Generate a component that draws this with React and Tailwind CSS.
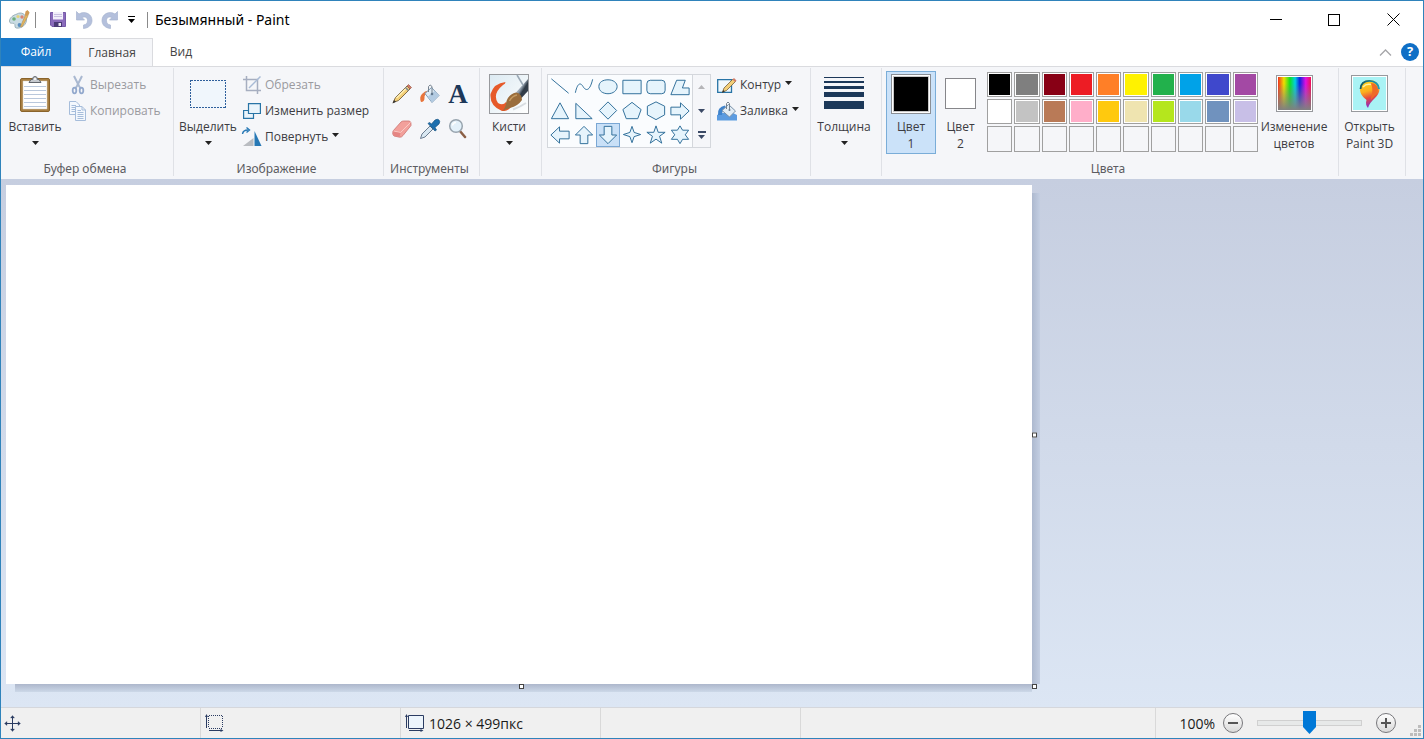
import { useState } from 'react'

const SHAPES = [
  { name: 'Линия', d: 'M3 4 L21 19' },
  { name: 'Кривая', d: 'M3 18.500 C5 9 8 7 11 12 S18 17 21 4.500', open: true },
  { name: 'Овал', d: 'M12 5 C17.500 5 21.500 8 21.500 12 S17.500 19.500 12 19.500 S2.500 16.500 2.500 12 S6.500 5 12 5 Z' },
  { name: 'Прямоугольник', d: 'M2.500 5.500 H21.500 V19.500 H2.500 Z' },
  { name: 'Скругленный прямоугольник', d: 'M6 5.500 H18 Q21.500 5.500 21.500 9 V16 Q21.500 19.500 18 19.500 H6 Q2.500 19.500 2.500 16 V9 Q2.500 5.500 6 5.500 Z' },
  { name: 'Многоугольник', d: 'M8.500 5.500 H17.500 L14.500 13.500 H21.500 V20.500 H2.500 Z' },
  { name: 'Треугольник', d: 'M12 4 L21 20.500 H3 Z' },
  { name: 'Прямоугольный треугольник', d: 'M3.500 4.500 L20.500 20.500 H3.500 Z' },
  { name: 'Ромб', d: 'M12 3 L21 12 L12 21 L3 12 Z' },
  { name: 'Пятиугольник', d: 'M12 3.500 L21.500 11 L18 20.500 H6 L2.500 11 Z' },
  { name: 'Шестиугольник', d: 'M12 3 L21 7.500 V16.500 L12 21.500 L3 16.500 V7.500 Z' },
  { name: 'Стрелка вправо', d: 'M2.500 8.500 H12.500 V4 L21.500 12.500 L12.500 21 V16.500 H2.500 Z' },
  { name: 'Стрелка влево', d: 'M21.500 8.500 H11.500 V4 L2.500 12.500 L11.500 21 V16.500 H21.500 Z' },
  { name: 'Стрелка вверх', d: 'M8 21.500 V12.500 H3 L12 3.500 L21 12.500 H16 V21.500 Z' },
  { name: 'Стрелка вниз', d: 'M8 3.500 V12.500 H3 L12 21.500 L21 12.500 H16 V3.500 Z' },
  { name: 'Четырехконечная звезда', d: 'M12 3.500 L14.200 9.800 L21 12 L14.200 14.200 L12 20.500 L9.800 14.200 L3 12 L9.800 9.800 Z' },
  { name: 'Пятиконечная звезда', d: 'M12 3 L14.300 9.700 H21.500 L15.700 13.800 L18 21 L12 16.800 L6 21 L8.300 13.800 L2.500 9.700 H9.700 Z' },
  { name: 'Шестиконечная звезда', d: 'M12 3 L14.700 7.500 H21 L17.500 12.300 L21 17 H14.700 L12 21.500 L9.300 17 H3 L6.500 12.300 L3 7.500 H9.300 Z' },
]

const COLORS = [
  'bg-[#000000]', 'bg-[#7f7f7f]', 'bg-[#880015]', 'bg-[#ed1c24]', 'bg-[#ff7f27]',
  'bg-[#fff200]', 'bg-[#22b14c]', 'bg-[#00a2e8]', 'bg-[#3f48cc]', 'bg-[#a349a4]',
  'bg-[#ffffff]', 'bg-[#c3c3c3]', 'bg-[#b97a57]', 'bg-[#ffaec9]', 'bg-[#ffc90e]',
  'bg-[#efe4b0]', 'bg-[#b5e61d]', 'bg-[#99d9ea]', 'bg-[#7092be]', 'bg-[#c8bfe7]',
]

function Caret({ up, className = 'text-[#222]' }) {
  return (
    <svg width="7" height="4" viewBox="0 0 7 4" className={className} fill="currentColor">
      <path d={up ? 'M0 4 H7 L3.500 0 Z' : 'M0 0 H7 L3.500 4 Z'} />
    </svg>
  )
}

function Group({ label, className, children }) {
  return (
    <section className={`flex shrink-0 flex-col border-r border-[#dfe1e6] pt-[3px] ${className}`}>
      <div className="flex h-[83px] items-start">{children}</div>
      <div className="mt-1.5 h-4 pr-2 text-center font-['Noto_Sans',sans-serif] text-[12px] leading-[18px] text-[#5c5c62]">{label}</div>
    </section>
  )
}

function BigButton({ icon, label, second, className = 'w-15' }) {
  return (
    <button type="button" className={`flex h-[83px] shrink-0 flex-col items-center whitespace-nowrap ${className}`}>
      <span className="mb-[3px] flex h-[45px] items-center justify-center">{icon}</span>
      <span className="h-4 leading-4">{label}</span>
      {second ? <span className="leading-[18px]">{second}</span> : <span className="flex h-[15px] items-center"><Caret /></span>}
    </button>
  )
}

function SmallButton({ icon, label, menu, disabled }) {
  return (
    <button
      type="button"
      disabled={disabled}
      className="flex h-[26px] items-center gap-1 whitespace-nowrap disabled:text-[#9a9a9f]"
    >
      {icon}
      <span>{label}</span>
      {menu && <Caret className="mb-1 text-[#222]" />}
    </button>
  )
}

function PaletteIcon() {
  return (
    <svg width="21" height="20" viewBox="0 0 21 20">
      <path d="M8 4 C12 1.500 17 4 17.500 9 C18 14 13 19 7 18 C5 17.500 7 14.500 5 13.500 C3 13 0.500 14 0.500 11 C0.500 8 4 5 8 4 Z" fill="#c9dbe3" stroke="#8ba3ad" strokeWidth="0.800" />
      <circle cx="5" cy="9" r="1.800" fill="#6fae7d" />
      <circle cx="9" cy="6.500" r="1.600" fill="#e3d37d" />
      <circle cx="13" cy="7" r="1.700" fill="#d98372" />
      <circle cx="10.500" cy="15" r="1.900" fill="#5a8fc0" />
      <path d="M18 1 L20 2 L18.500 7 L13 17 L11.500 16.500 L16 6 Z" fill="#e5b65e" stroke="#b08d52" strokeWidth="0.600" />
      <path d="M16.500 1.500 L18.500 0 L20.500 3 L18 6 L16 5 Z" fill="#d19b55" />
    </svg>
  )
}

function SaveIcon() {
  return (
    <svg width="16" height="15" viewBox="0 0 16 15">
      <path d="M0.500 0.500 H15.500 V14.500 H2 L0.500 13 Z" fill="#8a6bbb" stroke="#7559a8" />
      <path d="M3 0 H13 V7.500 H3 Z" fill="#f2effa" />
      <path d="M4 2.500 H12 M4 4.500 H12" stroke="#c8bfe0" />
      <path d="M4 10 H12 V15 H4 Z" fill="#4b3b76" />
      <path d="M8.500 11 H11 V14 H8.500 Z" fill="#ece9f5" />
    </svg>
  )
}

function UndoIcon({ flip }) {
  return (
    <svg width="17" height="18" viewBox="0 0 17 18" className={flip ? '-scale-x-100' : ''}>
      <path d="M0.500 0.500 L3 3 C9 -0.500 16 3 16 9.500 C16 14 12.500 17 7.500 17.500 V14 C10.500 13.500 11.500 12 11.500 9.500 C11.500 6.500 9 5 6 6.500 L8.500 9 H0.500 Z" fill="#b4c0dc" stroke="#a8b4d0" strokeWidth="0.700" />
    </svg>
  )
}

function PasteIcon() {
  return (
    <svg width="32" height="38" viewBox="0 0 32 38">
      <rect x="1.500" y="3.500" width="29" height="33" rx="1.500" fill="#a87f42" stroke="#8a642c" />
      <path d="M4 6 H28 V34 H4 Z" fill="#fff" stroke="#d8d1c2" strokeWidth="0.500" />
      <path d="M5 11.500 H27 M5 15.500 H27 M5 19.500 H27 M5 23.500 H27 M5 27.500 H27 M5 31.500 H27" stroke="#b9c8dc" />
      <path d="M10 7.500 L12 4.500 H13.500 Q13.500 1.500 16 1.500 T18.500 4.500 H20 L22 7.500 Z" fill="#c5c9ce" stroke="#62676e" />
      <circle cx="16" cy="4" r="1" fill="#fff" />
    </svg>
  )
}

function CutIcon() {
  return (
    <svg width="16" height="20" viewBox="0 0 16 20" fill="none">
      <path d="M4 1 L9 11 L11 14 M12 1 L7 11 L5 14" stroke="#a9b8d0" strokeWidth="2" />
      <ellipse cx="4.500" cy="15.500" rx="1.800" ry="2.800" stroke="#93a9cd" strokeWidth="1.800" />
      <ellipse cx="11.500" cy="15.500" rx="1.800" ry="2.800" stroke="#93a9cd" strokeWidth="1.800" />
    </svg>
  )
}

function CopyIcon() {
  return (
    <svg width="16" height="20" viewBox="0 0 16 20" className="overflow-visible" fill="#f4f8fd" stroke="#a6bddb">
      <path d="M-0.500 0.500 H6 L9.500 4 V13.500 H-0.500 Z" />
      <path d="M1.500 4.500 H6 M1.500 6.500 H6 M1.500 8.500 H6 M1.500 10.500 H6" />
      <path d="M5.500 5.500 H12 L15.500 9 V19.500 H5.500 Z M12 5.500 V9 H15.500" />
      <path d="M7.500 9.500 H11 M7.500 11.500 H13.500 M7.500 13.500 H13.500 M7.500 15.500 H13.500 M7.500 17.500 H13.500" />
    </svg>
  )
}

function SelectIcon() {
  return (
    <svg width="36" height="28" viewBox="0 0 36 28" shapeRendering="crispEdges">
      <rect x="0.500" y="0.500" width="35" height="27" fill="#f0f6fc" stroke="#2d5f9c" strokeDasharray="2 1" />
    </svg>
  )
}

function CropIcon() {
  return (
    <svg width="18" height="18" viewBox="0 0 18 18" fill="none" stroke="#a6aec0" strokeWidth="1.500">
      <path d="M3.500 0 V14.500 H18 M0 3.500 H14.500 V18" />
      <path d="M17.500 0.500 L6 12" stroke="#a9bbd6" />
    </svg>
  )
}

function ResizeIcon() {
  return (
    <svg width="18" height="18" viewBox="0 0 18 18" fill="#eaf4fb" stroke="#2874a6" strokeWidth="1.200">
      <path d="M0.600 8.500 H10.500 V16.400 H0.600 Z" />
      <path d="M5.500 1.600 H17.400 V11.500 H5.500 Z" />
    </svg>
  )
}

function RotateIcon() {
  return (
    <svg width="18" height="20" viewBox="0 0 18 20" className="overflow-visible">
      <path d="M0 19 L10.500 11 V19 Z" fill="#b9bcc1" />
      <path d="M11.500 4 L18.500 19 H11.500 Z" fill="#2778b5" />
      <path d="M-0.500 7 Q0 3 5 3" fill="none" stroke="#2778b5" strokeWidth="1.400" />
      <path d="M3.500 0.500 L6.500 3 L3.500 5.500" fill="none" stroke="#2778b5" strokeWidth="1.400" />
    </svg>
  )
}

function PencilIcon() {
  return (
    <svg width="22" height="22" viewBox="0 0 22 22">
      <path d="M2 19.500 L4.500 14.500 L16 3 L19 6 L7.500 17.500 Z" fill="#f3cf78" stroke="#75603a" strokeWidth="0.900" />
      <path d="M5.500 15 L16 4.500" stroke="#fff0b8" strokeWidth="1.200" />
      <path d="M14.500 4.500 L17.500 7.500" stroke="#7e8794" strokeWidth="1.500" />
      <path d="M16 3 L17.500 1.500 L20.500 4.500 L19 6 Z" fill="#d27a66" stroke="#9a5a4a" strokeWidth="0.700" />
      <path d="M1.500 20.500 L3.200 17 L5 18.800 Z" fill="#333" />
    </svg>
  )
}

function BucketIcon() {
  return (
    <svg width="22" height="22" viewBox="0 0 22 22">
      <path d="M2 19 Q0 14 3 11 Q7 7 10 8 L9 11 Q5 11 5.500 15 Q5.500 19 2 19 Z" fill="#e8743b" />
      <path d="M6 10.500 L12.500 4.500 L20 12.500 L13 19.500 Z" fill="#dfebf5" stroke="#7f9cb6" />
      <path d="M9 13.500 L15.500 8 L20 12.500 L13 19.500 Z" fill="#b3cbe2" />
      <path d="M9.500 9 V3.500 Q11 0.500 13 3.500 V10.500" fill="none" stroke="#75828f" />
      <circle cx="13" cy="11" r="1.300" fill="#62788e" />
    </svg>
  )
}

function EraserIcon() {
  return (
    <svg width="22" height="20" viewBox="0 0 22 20">
      <path d="M2 12 L10 3 Q11 2 12.500 2 H18.500 Q20.500 3 20 6.500 L12 16.500 Q10.500 18.500 8.500 18.200 L3 17 Q1 15.500 2 12 Z" fill="#f2a09b" stroke="#cc7471" strokeWidth="0.800" />
      <path d="M2.500 12 L9.500 13.500 L19.500 3.500" fill="none" stroke="#f9cac5" />
      <path d="M2.200 12.500 L9.500 14 L8.500 18 L3 16.700 Q1.500 15.500 2.200 12.500 Z" fill="#e58583" />
    </svg>
  )
}

function PickerIcon() {
  return (
    <svg width="22" height="22" viewBox="0 0 22 22">
      <path d="M1.500 20.500 L3 16 L11 8 L14 11 L6 19 Z" fill="#d9e7f2" stroke="#5c6f84" strokeWidth="0.900" />
      <path d="M9 5.500 L10.500 4.500 L12.500 6 L16 2 Q18.500 0.500 20 2 T20 6 L16 9.500 L17.500 12 L16 13 Z" fill="#1d6fae" stroke="#175484" strokeWidth="0.700" />
    </svg>
  )
}

function MagnifierIcon() {
  return (
    <svg width="20" height="22" viewBox="0 0 20 22">
      <path d="M11.500 12.500 L17 19" stroke="#8a5f45" strokeWidth="2.500" strokeLinecap="round" />
      <circle cx="8" cy="8" r="6.300" fill="#e3f1fa" stroke="#98a4ae" strokeWidth="1.500" />
      <path d="M4.500 7.500 Q5 4.500 8 4.500" stroke="#fff" strokeWidth="1.500" fill="none" />
    </svg>
  )
}

function BrushIcon() {
  return (
    <svg width="40" height="40" viewBox="0 0 40 40">
      <defs>
        <linearGradient id="brushBg" x1="0" y1="0" x2="1" y2="1">
          <stop offset="0" stopColor="#dceaf2" />
          <stop offset="1" stopColor="#fff" />
        </linearGradient>
        <linearGradient id="handle" x1="0" y1="0" x2="1" y2="1">
          <stop offset="0" stopColor="#e6ebef" />
          <stop offset="0.450" stopColor="#93a0ad" />
          <stop offset="0.600" stopColor="#2f3a46" />
          <stop offset="1" stopColor="#3d4754" />
        </linearGradient>
      </defs>
      <rect x="0.500" y="0.500" width="39" height="39" fill="url(#brushBg)" stroke="#97999d" />
      <path d="M16.500 8 Q5 9 1.500 20 Q0.500 32 13 37 Q19 37 22 33 L17 28 Q14 32 9 29 Q3 20 14 11 Q16.500 10 16.500 8 Z" fill="#e65a2a" />
      <path d="M27 18.500 L39 5 V17 L32.500 24 Z" fill="url(#handle)" />
      <path d="M28 1 L34 11" stroke="#9aa8b5" strokeWidth="1.500" />
      <path d="M17.500 27 Q20 20 27 18.500 Q33 19.500 33 26 Q29 32 21 34 Q17 35 13.500 37 Q17 33 17.500 27 Z" fill="#9a6d3c" />
      <path d="M20.500 27 Q23 22 28 21" stroke="#c49a60" strokeWidth="1.500" fill="none" />
      <path d="M24 35.500 Q31 33 37 29" stroke="#d8dde1" strokeWidth="2" fill="none" />
    </svg>
  )
}

function OutlineIcon() {
  return (
    <svg width="19" height="17" viewBox="0 0 19 17" className="overflow-visible">
      <path d="M0.700 2.700 H14.500 V15.300 H0.700 Z" fill="#f1f8fc" stroke="#2874a6" strokeWidth="1.300" />
      <path d="M5.500 15 L7 11 L16 2 L18.500 4.500 L9.500 13.500 Z" fill="#f3cf78" stroke="#75603a" strokeWidth="0.800" />
      <path d="M15.500 2.500 L17 1 L19.500 3.500 L18 5 Z" fill="#d27a66" />
      <path d="M5 16 L6.300 13 L7.800 14.500 Z" fill="#333" />
    </svg>
  )
}

function FillIcon() {
  return (
    <svg width="19" height="20" viewBox="0 0 19 20" className="overflow-visible">
      <path d="M0 14 L5 12 H16 L20 14 V19.500 H0 Z" fill="#5b9be0" />
      <path d="M1 14 Q0 6 8 4.500 L9 7 Q5 9 5 14 Z" fill="#3f83cc" />
      <path d="M5 9.500 L11.500 3.500 L18.500 10 L12.500 16 Z" fill="#e3edf5" stroke="#7890a8" />
      <path d="M9.500 8 V2.500 Q11 -0.500 12.500 2.500 V8.500" fill="none" stroke="#75828f" />
      <circle cx="12.500" cy="9" r="1" fill="#62788e" />
    </svg>
  )
}

function ThicknessIcon() {
  return (
    <svg width="40" height="33" viewBox="0 0 40 33" fill="#1c3859">
      <path d="M0 0 H40 V1 H0 Z M0 4 H40 V6 H0 Z M0 9 H40 V12 H0 Z M0 15 H40 V20 H0 Z M0 24 H40 V32 H0 Z" />
    </svg>
  )
}

function RainbowIcon() {
  return (
    <span className="block size-[37px] border border-[#97999d] bg-white p-px">
      <span className="block size-full bg-[linear-gradient(to_bottom,transparent_20%,#808080),linear-gradient(to_right,#f03020,#f0e000_18%,#10e020_36%,#00d0e0_52%,#1020e0_66%,#e010e0_84%,#f01050)]" />
    </span>
  )
}

function Paint3DIcon() {
  return (
    <svg width="37" height="37" viewBox="0 0 37 37">
      <defs>
        <linearGradient id="drop" x1="0" y1="0" x2="0.200" y2="1">
          <stop offset="0" stopColor="#ffd91f" />
          <stop offset="0.450" stopColor="#fbb01c" />
          <stop offset="0.700" stopColor="#e84a3d" />
          <stop offset="1" stopColor="#8a2fc4" />
        </linearGradient>
        <linearGradient id="rim" x1="0" y1="0" x2="1" y2="0">
          <stop offset="0" stopColor="#125a66" />
          <stop offset="1" stopColor="#1d9fc0" />
        </linearGradient>
      </defs>
      <rect x="0.500" y="0.500" width="36" height="36" fill="#fff" stroke="#97999d" />
      <path d="M2 2 H35 V35 H2 Z" fill="#a9f3f5" />
      <path d="M18.500 5 C24.500 5 28.500 9 28.500 14 C28.500 22 19 25 17 33 C15 31 14.500 28 15.500 25 C12 22 9 19 9 14 C9 9 13 5 18.500 5 Z" fill="url(#drop)" />
      <path d="M20 8 C24 8 27 11 27 14.500 C27 19 23 21 20 25 C20 20 23 17 20 8 Z" fill="#ef6a28" />
      <path d="M9.500 14 C9.500 9 13 5.800 18.500 5.800 S28 9.500 28 14" fill="none" stroke="url(#rim)" strokeWidth="1.800" />
      <path d="M12 12 Q15 8.500 20 9.500" fill="none" stroke="#fff2a0" strokeWidth="1.500" />
    </svg>
  )
}

function MoveIcon() {
  return (
    <svg width="17" height="17" viewBox="0 0 17 17" stroke="#2b3c62" fill="#2b3c62">
      <path d="M8.500 2 V15 M2 8.500 H15" />
      <path d="M8.500 0.500 L10.500 3 H6.500 Z M8.500 16.500 L10.500 14 H6.500 Z M0.500 8.500 L3 6.500 V10.500 Z M16.500 8.500 L14 6.500 V10.500 Z" strokeWidth="0.300" />
    </svg>
  )
}

function SizeIcon({ dotted }) {
  return (
    <svg width="19" height="18" viewBox="0 0 19 18" stroke="#2b3c62" fill="none">
      {dotted ? (
        <path d="M4 1.500 H18 M17.500 2 V14 M4 14.500 H18 M3.500 2 V14" strokeDasharray="1 1" shapeRendering="crispEdges" />
      ) : (
        <path d="M3.500 1.500 H18.500 V14.500 H3.500 Z" fill="#edf5fc" />
      )}
      <path d="M1.500 2 V14 M4 16.500 H17" />
      <path d="M1.500 0 L3 3 H0 Z M18.500 16.500 L15.500 15 V18 Z" fill="#2b3c62" stroke="none" />
    </svg>
  )
}

function ZoomButton({ label, plus }) {
  return (
    <button type="button" aria-label={label} className="flex size-5 shrink-0 items-center justify-center rounded-full border border-[#77777b] bg-linear-to-b from-white to-[#d9d9d9]">
      <svg width="12" height="12" viewBox="0 0 12 12" stroke="#555" strokeWidth="2">
        <path d={plus ? 'M1 6 H11 M6 1 V11' : 'M1 6 H11'} />
      </svg>
    </button>
  )
}

function TitleBar() {
  return (
    <header className="flex h-[37px] shrink-0 items-center bg-white pl-2 text-black">
      <PaletteIcon />
      <div className="ml-[5px] h-4 w-px bg-[#8a8a8a]" />
      <button type="button" aria-label="Сохранить" className="ml-3.5"><SaveIcon /></button>
      <button type="button" aria-label="Отменить" className="ml-2.5"><UndoIcon /></button>
      <button type="button" aria-label="Вернуть" className="ml-2"><UndoIcon flip /></button>
      <button type="button" aria-label="Настройка панели" className="ml-2.5 flex flex-col items-center gap-0.5">
        <span className="h-px w-[7px] bg-black" />
        <Caret className="text-black" />
      </button>
      <div className="ml-3 h-4 w-px bg-[#8a8a8a]" />
      <h1 className="ml-[7px] font-['Noto_Sans',sans-serif] text-[14px] leading-5">Безымянный - Paint</h1>
      <div className="ml-auto flex self-stretch">
        <button type="button" aria-label="Свернуть" className="flex w-[58px] items-center justify-center">
          <span className="h-px w-3 bg-black" />
        </button>
        <button type="button" aria-label="Развернуть" className="flex w-[58px] items-center justify-center">
          <span className="size-3 border border-black" />
        </button>
        <button type="button" aria-label="Закрыть" className="flex w-[60px] items-center justify-center">
          <svg width="13" height="13" viewBox="0 0 13 13" stroke="#000"><path d="M0.500 0.500 L12.500 12.500 M12.500 0.500 L0.500 12.500" /></svg>
        </button>
      </div>
    </header>
  )
}

function Tabs() {
  return (
    <nav className="flex h-7 shrink-0 items-stretch bg-white text-[#444]">
      <button type="button" className="w-[70px] bg-[#1979ca] text-white">Файл</button>
      <button type="button" className="-mb-px w-[82px] border border-b-0 border-[#dadbdf] bg-[#f5f6f9]">Главная</button>
      <button type="button" className="w-14">Вид</button>
      <button type="button" aria-label="Свернуть ленту" className="ml-auto flex w-6 items-center justify-center">
        <svg width="13" height="7" viewBox="0 0 13 7" fill="none" stroke="#a5a5a8" strokeWidth="1.300"><path d="M1 6.500 L6.500 1 L12 6.500" /></svg>
      </button>
      <button type="button" aria-label="Справка" className="mx-1 flex size-[18px] items-center justify-center self-center rounded-full bg-[#0f6fc6] text-[13px] font-bold text-white">?</button>
    </nav>
  )
}

function Ribbon() {
  const [shape, setShape] = useState(14)

  return (
    <div className="flex h-[113px] shrink-0 border-t border-[#dadbdf] bg-[#f5f6f9] pt-px pb-[3px] text-[#3c3c42]">
      <Group label="Буфер обмена" className="w-[173px] pl-1">
        <BigButton icon={<PasteIcon />} label="Вставить" />
        <div className="ml-[5px] pt-px">
          <SmallButton icon={<CutIcon />} label="Вырезать" disabled />
          <SmallButton icon={<CopyIcon />} label="Копировать" disabled />
        </div>
      </Group>

      <Group label="Изображение" className="w-[210px] pl-1">
        <BigButton icon={<SelectIcon />} label="Выделить" />
        <div className="ml-[5px] pt-px">
          <SmallButton icon={<CropIcon />} label="Обрезать" disabled />
          <SmallButton icon={<ResizeIcon />} label="Изменить размер" />
          <SmallButton icon={<RotateIcon />} label="Повернуть" menu />
        </div>
      </Group>

      <Group label="Инструменты" className="w-24 pl-1">
        <div className="mt-[5px] grid w-[84px] auto-rows-[35px] grid-cols-3">
          <button type="button" aria-label="Карандаш" className="flex items-center justify-center"><PencilIcon /></button>
          <button type="button" aria-label="Заливка цветом" className="flex items-center justify-center"><BucketIcon /></button>
          <button type="button" aria-label="Текст" className="font-['Liberation_Serif',serif] text-[27px] leading-7 font-bold text-[#1c3859]">A</button>
          <button type="button" aria-label="Ластик" className="flex items-center justify-center"><EraserIcon /></button>
          <button type="button" aria-label="Палитра" className="flex items-center justify-center"><PickerIcon /></button>
          <button type="button" aria-label="Масштаб" className="flex items-center justify-center"><MagnifierIcon /></button>
        </div>
      </Group>

      <Group className="w-[62px]">
        <BigButton icon={<BrushIcon />} label="Кисти" className="w-[58px]" />
      </Group>

      <Group label="Фигуры" className="w-[269px] pl-[5px]">
        <div className="mt-[3px] flex border border-[#d4d7dc] bg-[#fafcfe]">
          <div className="grid auto-rows-[24px] grid-cols-[repeat(6,24px)]">
            {SHAPES.map((s, i) => (
              <button
                key={s.name}
                type="button"
                aria-label={s.name}
                onClick={() => setShape(i)}
                className={i === shape ? 'bg-[#c9e0f7] outline -outline-offset-1 outline-[#7aa7d4]' : ''}
              >
                <svg width="24" height="24" viewBox="0 0 24 25" fill={s.open ? 'none' : '#e6f4fc'} stroke="#2c6c98">
                  <path d={s.d} />
                </svg>
              </button>
            ))}
          </div>
          <div className="flex w-[18px] flex-col border-l border-[#d4d7dc] bg-[#f5f6f9]">
            <button type="button" aria-label="Вверх" className="flex h-6 items-center justify-center"><Caret up className="text-[#b5b5b8]" /></button>
            <button type="button" aria-label="Вниз" className="flex h-6 items-center justify-center"><Caret className="text-[#3b4a66]" /></button>
            <button type="button" aria-label="Все фигуры" className="flex h-6 flex-col items-center justify-center gap-0.5">
              <span className="h-0.5 w-2 bg-[#3b4a66]" />
              <Caret className="text-[#3b4a66]" />
            </button>
          </div>
        </div>
        <div className="ml-1.5 pt-px">
          <SmallButton icon={<OutlineIcon />} label="Контур" menu />
          <SmallButton icon={<FillIcon />} label="Заливка" menu />
        </div>
      </Group>

      <Group className="w-[71px] pl-[3px]">
        <BigButton icon={<ThicknessIcon />} label="Толщина" />
      </Group>

      <Group label="Цвета" className="w-[457px] pl-1">
        <BigButton
          icon={<span className="block size-10 border border-[#8b8f95] bg-white p-px"><span className="block size-full border border-[#c8c8c8] bg-black" /></span>}
          label="Цвет"
          second="1"
          className="w-[50px] bg-[#cbe2f9] outline -outline-offset-1 outline-[#7aadd8]"
        />
        <BigButton
          icon={<span className="block size-[31px] border border-[#86868a] bg-white" />}
          label="Цвет"
          second="2"
          className="w-[49px]"
        />
        <div className="mt-px ml-0.5 grid w-[271px] grid-cols-10 gap-0.5">
          {COLORS.map(c => (
            <button key={c} type="button" aria-label="Цвет палитры" className="h-[25px] border border-[#a0a0a0] bg-white p-px">
              <span className={`block size-full ${c}`} />
            </button>
          ))}
          {Array.from({ length: 10 }, (_, i) => (
            <button key={i} type="button" aria-label="Пустая ячейка" className="h-[26px] border border-[#a0a0a0]" />
          ))}
        </div>
        <BigButton icon={<RainbowIcon />} label="Изменение" second="цветов" className="w-[72px]" />
      </Group>

      <Group className="w-[67px]">
        <BigButton icon={<Paint3DIcon />} label="Открыть" second="Paint 3D" className="w-[61px]" />
      </Group>
    </div>
  )
}

function Workspace() {
  return (
    <main className="min-h-0 flex-1 overflow-hidden bg-linear-to-b from-[#c6cee0] to-[#dce6f4] pt-1.5 pl-[5px]">
      <div className="relative h-[499px] w-[1026px] bg-white">
        <div className="absolute top-2 bottom-0 left-full w-2 bg-linear-to-r from-[#adb9cf] to-[#c3cee2]" />
        <div className="absolute top-full right-0 left-[9px] h-2 bg-linear-to-b from-[#adb7cc] to-[#ccd8e8]" />
        <span className="absolute top-1/2 left-full size-[5px] -translate-y-1/2 border border-[#444] bg-white" />
        <span className="absolute top-full left-1/2 size-[5px] border border-[#444] bg-white" />
        <span className="absolute top-full left-full size-[5px] border border-[#444] bg-white" />
      </div>
    </main>
  )
}

function StatusBar() {
  const [zoom, setZoom] = useState(50)

  return (
    <footer className="flex h-[31px] shrink-0 items-stretch border-t border-[#d5d7dc] bg-[#f0f0f0] text-[14px] text-[#1a1a1a]">
      <div className="flex w-[200px] items-center border-r border-[#d9d9d9] pl-[3px]"><MoveIcon /></div>
      <div className="flex w-[200px] items-center border-r border-[#d9d9d9] pl-1"><SizeIcon dotted /></div>
      <div className="flex w-[200px] items-center gap-[5px] border-r border-[#d9d9d9] pl-1">
        <SizeIcon />
        <span>1026 × 499пкс</span>
      </div>
      <div className="w-[200px] border-r border-[#d9d9d9]" />
      <div className="ml-auto flex w-[268px] items-center border-l border-[#d9d9d9]">
        <label htmlFor="zoom" className="w-[59px] text-right">{zoom * 2}%</label>
        <div className="ml-2 flex items-center gap-3.5">
          <ZoomButton label="Уменьшить" />
          <input
            id="zoom"
            type="range"
            value={zoom}
            onChange={e => setZoom(Number(e.target.value))}
            className="h-6 w-[105px] appearance-none bg-transparent [&::-webkit-slider-runnable-track]:h-[6px] [&::-webkit-slider-runnable-track]:border [&::-webkit-slider-runnable-track]:border-[#d0d0d0] [&::-webkit-slider-runnable-track]:bg-[#e7e9e9] [&::-webkit-slider-thumb]:-mt-[10px] [&::-webkit-slider-thumb]:h-[23px] [&::-webkit-slider-thumb]:w-[13px] [&::-webkit-slider-thumb]:appearance-none [&::-webkit-slider-thumb]:bg-[#0078d7] [&::-webkit-slider-thumb]:[clip-path:polygon(0_0,100%_0,100%_70%,50%_100%,0_70%)]"
          />
          <ZoomButton label="Увеличить" plus />
        </div>
        <svg width="11" height="11" viewBox="0 0 11 11" fill="#bdbdbd" className="mr-0.5 mb-0.5 ml-auto self-end">
          <path d="M8 0 H11 V3 H8 Z M4 4 H7 V7 H4 Z M8 4 H11 V7 H8 Z M0 8 H3 V11 H0 Z M4 8 H7 V11 H4 Z M8 8 H11 V11 H8 Z" />
        </svg>
      </div>
    </footer>
  )
}

export default function App() {
  return (
    <div className="flex h-screen flex-col overflow-hidden border border-[#2f83bb] font-['Open_Sans','Noto_Sans',sans-serif] text-[12px]">
      <TitleBar />
      <Tabs />
      <Ribbon />
      <Workspace />
      <StatusBar />
    </div>
  )
}
